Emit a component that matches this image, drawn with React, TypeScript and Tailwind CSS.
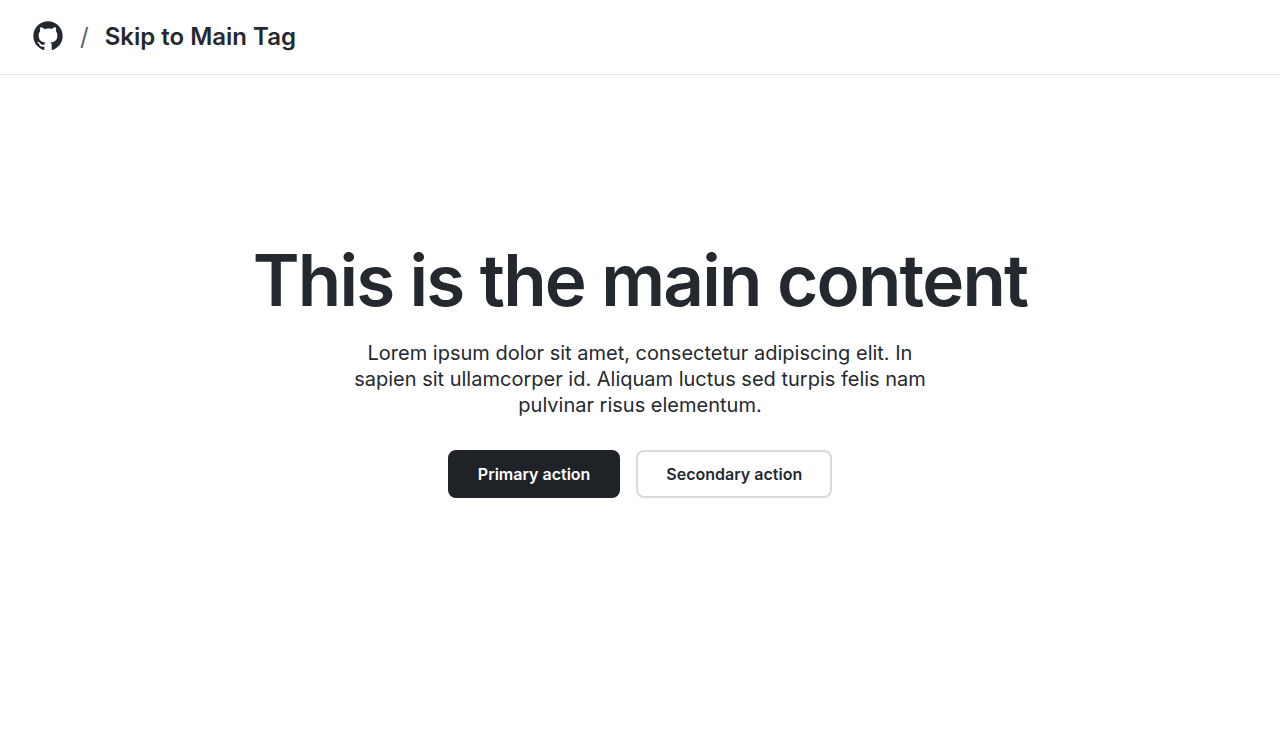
const pageFont = 'font-["Inter","Liberation_Sans",sans-serif]';

function GitHubMark() {
  return (
    <svg viewBox="0 0 24 24" className="size-8" fill="currentColor" aria-hidden="true">
      <path d="M12 1C5.923 1 1 5.923 1 12c0 4.867 3.149 8.979 7.521 10.436.55.096.756-.233.756-.522 0-.262-.013-1.128-.013-2.049-2.764.509-3.479-.674-3.699-1.292-.124-.317-.66-1.293-1.127-1.554-.385-.207-.936-.715-.014-.729.866-.014 1.485.797 1.691 1.128.99 1.663 2.571 1.196 3.204.907.096-.715.385-1.196.701-1.471-2.448-.275-5.005-1.224-5.005-5.432 0-1.196.426-2.186 1.128-2.956-.111-.275-.496-1.402.11-2.915 0 0 .921-.288 3.024 1.128a10.193 10.193 0 0 1 2.75-.371c.936 0 1.871.123 2.75.371 2.104-1.43 3.025-1.128 3.025-1.128.605 1.513.221 2.64.111 2.915.701.77 1.127 1.747 1.127 2.956 0 4.222-2.571 5.157-5.019 5.432.399.344.743 1.004.743 2.035 0 1.471-.014 2.654-.014 3.025 0 .289.206.632.756.522C19.851 20.979 23 16.854 23 12c0-6.077-4.922-11-11-11Z" />
    </svg>
  );
}

export default function App() {
  return (
    <div className={`min-h-screen bg-white text-[#24292f] ${pageFont}`}>
      <header className="flex items-start gap-4 border-b border-[#e4e5e7] px-8 py-5">
        <a href="#" aria-label="GitHub home">
          <GitHubMark />
        </a>
        <span aria-hidden="true" className="text-2xl leading-[34px] text-[#57606a]">/</span>
        <a href="#" className="text-2xl leading-[34px] font-semibold">Skip to Main Tag</a>
      </header>
      <main className="flex flex-col items-center px-4 pt-[165px] pb-24 text-center">
        <h1 className="text-[71px] leading-[80px] font-semibold tracking-tight">This is the main content</h1>
        <p className="mt-5 max-w-[600px] text-xl leading-[26px]">
          Lorem ipsum dolor sit amet, consectetur adipiscing elit. In sapien sit ullamcorper id. Aliquam luctus sed turpis felis nam pulvinar risus elementum.
        </p>
        <div className="mt-8 flex flex-wrap justify-center gap-4">
          <button type="button" className="h-12 rounded-lg border-2 border-[#1f2328] bg-[#1f2328] px-7 font-semibold text-white">Primary action</button>
          <button type="button" className="h-12 rounded-lg border-2 border-[#d8d9da] px-7 font-semibold">Secondary action</button>
        </div>
      </main>
    </div>
  );
}
